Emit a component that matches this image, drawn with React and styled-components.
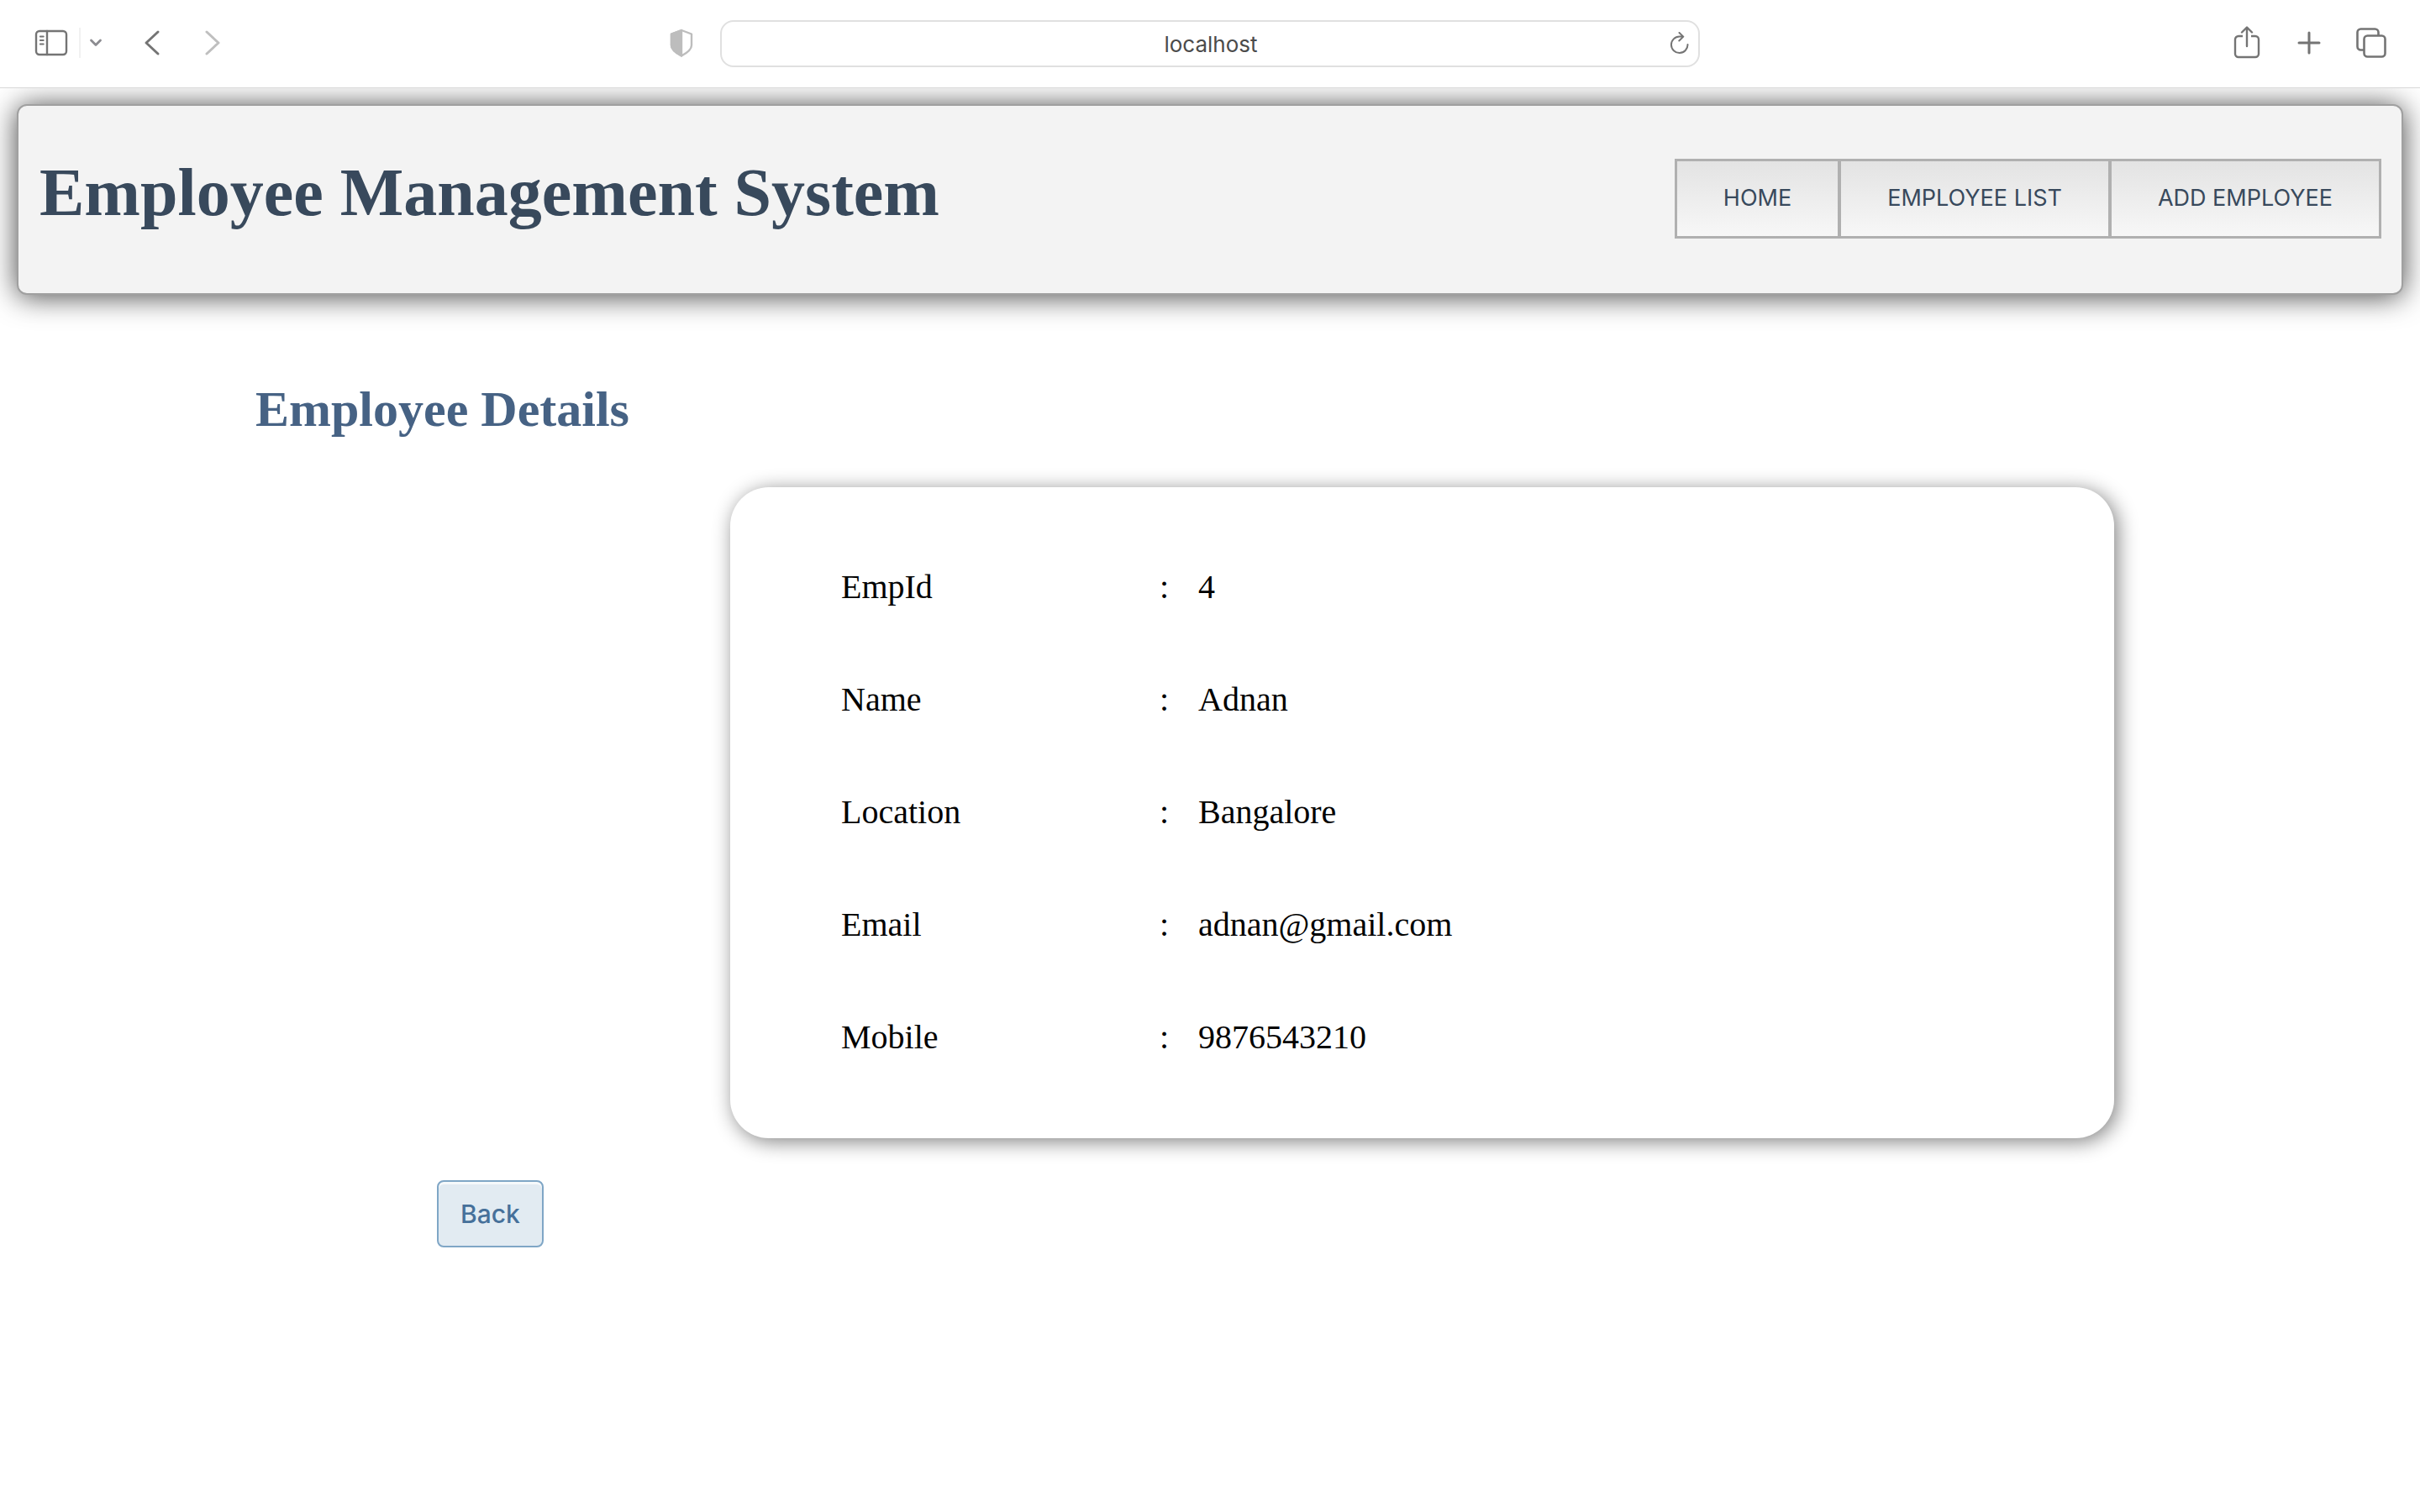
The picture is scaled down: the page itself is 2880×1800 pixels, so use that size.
import React from "react";
import styled, { createGlobalStyle } from "styled-components";

const sans = `Inter, "Liberation Sans", Arial, sans-serif`;
const serif = `"Liberation Serif", "Times New Roman", serif`;

const GlobalStyle = createGlobalStyle`
  *, *::before, *::after { box-sizing: border-box; }
  body { margin: 0; background: #fff; font-family: ${serif}; color: #000; }
`;

const Toolbar = styled.header`
  position: relative;
  z-index: 1;
  display: grid;
  grid-template-columns: 1fr 1166px 1fr;
  align-items: center;
  height: 105px;
  padding: 0 34px;
  background: #fff;
  border-bottom: 1px solid #d8d8d8;
`;

const ToolGroup = styled.div`
  display: flex;
  align-items: center;
  justify-content: ${(p) => p.$justify || "flex-start"};
  gap: ${(p) => p.$gap || 0}px;
  padding-bottom: 2px;
`;

const IconButton = styled.button`
  display: flex;
  align-items: center;
  justify-content: center;
  width: ${(p) => p.$width || 48}px;
  height: 48px;
  padding: 0;
  border: 0;
  background: none;
  color: ${(p) => p.$color || "#747474"};
`;

const Icon = styled.svg`
  display: block;
  fill: none;
  stroke: currentColor;
  stroke-linecap: round;
  stroke-linejoin: round;
`;

const Separator = styled.span`
  width: 2px;
  height: 36px;
  margin-left: 6px;
  background: #f1f1f1;
`;

const Spacer = styled.span`
  flex: 1;
`;

const AddressBar = styled.div`
  display: flex;
  align-items: center;
  height: 56px;
  padding: 0 2px 0 44px;
  border: 2px solid #e0e0e0;
  border-radius: 16px;
  background: #fff;
`;

const AddressInput = styled.input`
  flex: 1;
  min-width: 0;
  padding: 2px 0 0;
  border: 0;
  background: none;
  color: #4b4b4b;
  font: 400 26px/32px ${sans};
  text-align: center;
`;

const Banner = styled.div`
  display: flex;
  align-items: center;
  justify-content: space-between;
  margin: 19px 20px 0;
  padding: 57px 24px 59px 25px;
  border: 2px solid #a0a0a0;
  border-radius: 12px;
  background: #f3f3f3;
  box-shadow: 0 2px 34px rgba(0, 0, 0, 0.72);
`;

const Title = styled.h1`
  margin: 0 0 15px;
  color: #38495c;
  font: 700 80px/92px ${serif};
`;

const Nav = styled.nav`
  display: flex;
  border: 1px solid #b0b0b0;
`;

const NavLink = styled.a`
  padding: 27px 55px 28px;
  border: 2px solid #b0b0b0;
  background: linear-gradient(#e3e3e3, #f7f7f7);
  color: #38495c;
  font: 400 27px/34px ${sans};
  text-decoration: none;
`;

const Content = styled.main`
  padding: 100px 364px 40px 304px;
`;

const Heading = styled.h2`
  margin: 0 0 57px;
  color: #466284;
  font: 700 60px/72px ${serif};
`;

const Card = styled.section`
  margin-left: 565px;
  padding: 52px 132px 53px;
  border-radius: 46px;
  background: #fff;
  box-shadow: 4px 4px 24px gray;
`;

const Details = styled.table`
  border-collapse: collapse;
  font: 400 40px/46px ${serif};
`;

const Label = styled.th`
  width: 379px;
  height: 134px;
  padding: 0;
  font-weight: 400;
  text-align: left;
`;

const Colon = styled.td`
  width: 46px;
  padding: 0;
`;

const Value = styled.td`
  padding: 0;
`;

const BackButton = styled.button`
  display: block;
  height: 80px;
  margin: 50px 0 0 216px;
  padding: 0 26px;
  border: 2px solid #7fa6c6;
  border-radius: 8px;
  background: #e2ebf2;
  box-shadow: inset 0 3px 0 rgba(255, 255, 255, 0.7);
  color: #46709a;
  font: 500 30px/40px ${sans};
`;

const links = ["HOME", "EMPLOYEE LIST", "ADD EMPLOYEE"];

const employee = [
  ["EmpId", "4"],
  ["Name", "Adnan"],
  ["Location", "Bangalore"],
  ["Email", "adnan@gmail.com"],
  ["Mobile", "9876543210"],
];

function BrowserToolbar() {
  return (
    <Toolbar>
      <ToolGroup>
        <IconButton $width={54} aria-label="Sidebar">
          <Icon width="40" height="32" viewBox="0 0 40 32" strokeWidth="2.4">
            <rect x="2" y="2" width="36" height="28" rx="4" />
            <path d="M15 2v28" />
            <path d="M6.800 8.500h4M6.800 13h4M6.800 17.500h4" strokeWidth="1.800" />
          </Icon>
        </IconButton>
        <Separator />
        <IconButton $width={36} $color="#8c8c91" aria-label="Tab groups">
          <Icon width="16" height="12" viewBox="0 0 16 12" strokeWidth="2.800">
            <path d="M2.500 3l5.500 5.500L13.500 3" />
          </Icon>
        </IconButton>
        <IconButton $width={98} aria-label="Back">
          <Icon width="20" height="32" viewBox="0 0 20 32" strokeWidth="3">
            <path d="M17 3L3 16l14 13" />
          </Icon>
        </IconButton>
        <IconButton $width={46} $color="#bfbfbf" aria-label="Forward">
          <Icon width="20" height="32" viewBox="0 0 20 32" strokeWidth="3">
            <path d="M3 3l14 13L3 29" />
          </Icon>
        </IconButton>
        <Spacer />
        <IconButton $width={92} $color="#bdbdbd" aria-label="Privacy report">
          <Icon width="28" height="34" viewBox="0 0 28 34" strokeWidth="2.400">
            <path d="M14 2L26 6.500V20c0 5-4.500 8.500-12 12.500C6.500 28.500 2 25 2 20V6.500z" />
            <path d="M14 2v30.500C6.500 28.500 2 25 2 20V6.500z" fill="currentColor" />
          </Icon>
        </IconButton>
      </ToolGroup>
      <AddressBar>
        <AddressInput aria-label="Address" defaultValue="localhost" />
        <IconButton $width={40} aria-label="Reload">
          <Icon width="24" height="28" viewBox="0 0 24 28" strokeWidth="2">
            <path d="M21.500 15a9.800 9.800 0 1 1-9.700-9.500H16M11.500 1L16.300 5.600 11.300 10.500" />
          </Icon>
        </IconButton>
      </AddressBar>
      <ToolGroup $justify="flex-end" $gap={26}>
        <IconButton aria-label="Share">
          <Icon width="32" height="40" viewBox="0 1 32 40" strokeWidth="2.400">
            <path d="M11 13H6a4 4 0 0 0-4 4v17a4 4 0 0 0 4 4h20a4 4 0 0 0 4-4V17a4 4 0 0 0-4-4h-5" strokeLinecap="butt" />
            <path d="M16 25V3M10 8.500L16 2.500l6 6" />
          </Icon>
        </IconButton>
        <IconButton aria-label="New tab">
          <Icon width="28" height="28" viewBox="0 0 28 28" strokeWidth="3">
            <path d="M14 2v24M2 14h24" />
          </Icon>
        </IconButton>
        <IconButton aria-label="Tab overview">
          <Icon width="38" height="38" viewBox="0 0 38 38" strokeWidth="2.600">
            <rect x="10.500" y="10.500" width="25" height="25" rx="4" />
            <path d="M10.500 27.500H6.500a4 4 0 0 1-4-4V6.500a4 4 0 0 1 4-4h17a4 4 0 0 1 4 4v4" strokeLinecap="butt" />
          </Icon>
        </IconButton>
      </ToolGroup>
    </Toolbar>
  );
}

export default function App() {
  return (
    <>
      <GlobalStyle />
      <BrowserToolbar />
      <Banner>
        <Title>Employee Management System</Title>
        <Nav>
          {links.map((name) => (
            <NavLink href="#" key={name}>
              {name}
            </NavLink>
          ))}
        </Nav>
      </Banner>
      <Content>
        <Heading>Employee Details</Heading>
        <Card>
          <Details>
            <tbody>
              {employee.map(([label, value]) => (
                <tr key={label}>
                  <Label scope="row">{label}</Label>
                  <Colon>:</Colon>
                  <Value>{value}</Value>
                </tr>
              ))}
            </tbody>
          </Details>
        </Card>
        <BackButton type="button">Back</BackButton>
      </Content>
    </>
  );
}
